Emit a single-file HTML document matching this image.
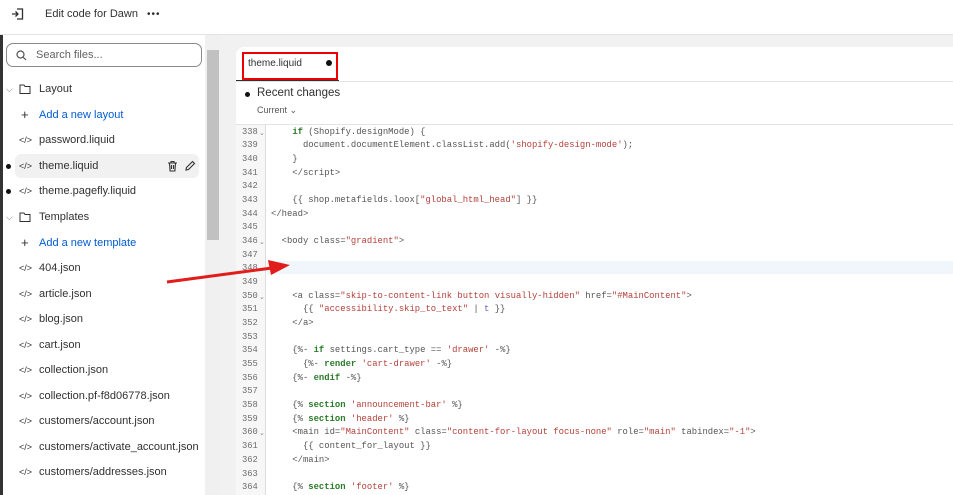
<!DOCTYPE html>
<html style="overflow:hidden;width:953px;height:495px"><head><style>
*{margin:0;padding:0;box-sizing:border-box}
body{width:953px;height:495px;overflow:hidden;background:#f1f1f1;font-family:"Liberation Sans",sans-serif}
#w{position:relative;width:953px;height:495px;overflow:hidden}
.top{position:absolute;left:0;top:0;width:953px;height:35px;background:#fff;border-bottom:1px solid #e3e3e3}
.top .t{position:absolute;left:45px;top:8px;font-size:11px;color:#303030}
.side{position:absolute;left:0;top:35px;width:205px;height:460px;background:#fff;border-left:3px solid #333}
.search{position:absolute;left:3px;top:8px;width:196px;height:24px;border:1px solid #8a8a8a;border-radius:7px;font-size:11px;color:#616161;padding:5px 0 0 29px}
.item{position:absolute;left:0;height:24px;width:198px;font-size:11px;color:#303030;line-height:24px}
.item .ic{position:absolute;left:19px;font-size:9px;color:#303030}
.item .tx{position:absolute;left:39px}
.blue{color:#005bd3}
.dot{position:absolute;left:6px;top:10px;width:5px;height:5px;border-radius:50%;background:#111}
.sb{position:absolute;left:205px;top:35px;width:14px;height:460px;background:#f0f0f0}
.thumb{position:absolute;left:207px;top:50px;width:12px;height:190px;background:#c1c1c1}
.card{position:absolute;left:236px;top:47px;width:717px;height:448px;background:#fff;border-radius:8px 0 0 0;overflow:hidden}
.tab{position:absolute;left:0;top:0;width:103px;height:34px;border-bottom:1.5px solid #303030;font-size:10px;color:#303030;padding:11px 0 0 12px}
.tabline{position:absolute;left:0;top:34px;width:717px;border-top:1px solid #e3e3e3}
.red{position:absolute;left:242px;top:52px;width:96px;height:28px;border:2.5px solid #e00}
.gut{position:absolute;left:0;top:78px;width:30px;height:370px;background:#f7f7f7;border-right:1px solid #ddd}
.ln{position:absolute;left:236px;font-family:"Liberation Mono",monospace;font-size:8.8px;line-height:10px;color:#6d6d6d;width:30px;padding-left:6px}
.fd{position:absolute;left:259px;font-size:7px;line-height:8px;color:#888;font-family:"Liberation Sans",sans-serif}
.cd{position:absolute;left:271px;font-family:"Liberation Mono",monospace;font-size:8.9px;line-height:10px;color:#555;white-space:pre}
.k{color:#2a7a2a;font-weight:bold}.s{color:#b3413a}.p{color:#7a5ab8}
</style></head><body><div id="w">
<div class="top">
<svg style="position:absolute;left:11px;top:7px" width="14" height="14" viewBox="0 0 14 14" fill="none" stroke="#303030" stroke-width="1.3"><path d="M6 2h5.5v10H6M1 7h6M4.5 4.5L7 7 4.5 9.5"/></svg>
<span class="t">Edit code for Dawn</span>
<span class="t" style="left:147px;top:9px;font-size:10px;letter-spacing:1px">•••</span>
</div>
<div class="side">
<div class="search">Search files...</div>
<svg style="position:absolute;left:13px;top:15px" width="11" height="11" viewBox="0 0 11 11" fill="none" stroke="#555" stroke-width="1.2"><circle cx="4.5" cy="4.5" r="3.5"/><path d="M7 7l3 3"/></svg>
</div>
<div class="sb"></div><div class="thumb"></div>
<div style="position:absolute;left:0;top:1px">
<div class="item" style="top:76px"><span class="ic" style="left:6px;color:#777">⌵</span><svg style="position:absolute;left:19px;top:7px" width="12" height="10" viewBox="0 0 12 10" fill="none" stroke="#303030"><path d="M1 1h4l1 1.5h5v7H1z"/></svg><span class="tx">Layout</span></div>
<div class="item" style="top:102px"><span class="ic blue" style="font-size:13px;left:21px">+</span><span class="tx blue">Add a new layout</span></div>
<div class="item" style="top:127px"><span class="ic">&lt;/&gt;</span><span class="tx">password.liquid</span></div>
<div class="item" style="top:153px;left:15px;width:184px;background:#f1f1f1;border-radius:6px"></div>
<div class="item" style="top:153px"><div class="dot"></div><span class="ic">&lt;/&gt;</span><span class="tx">theme.liquid</span>
<svg style="position:absolute;left:167px;top:6px" width="11" height="12" viewBox="0 0 11 12" fill="none" stroke="#303030" stroke-width="1.1"><path d="M1 3h9M4 3V1.5h3V3M2.5 3l.6 8h4.8l.6-8M4.5 5v4M6.5 5v4"/></svg>
<svg style="position:absolute;left:184px;top:6px" width="12" height="12" viewBox="0 0 12 12" fill="none" stroke="#303030" stroke-width="1.1"><path d="M2 10l.5-2.5L8.5 1.5l2 2-6 6z"/></svg></div>
<div class="item" style="top:178px"><div class="dot"></div><span class="ic">&lt;/&gt;</span><span class="tx">theme.pagefly.liquid</span></div>
<div class="item" style="top:204px"><span class="ic" style="left:6px;color:#777">⌵</span><svg style="position:absolute;left:19px;top:7px" width="12" height="10" viewBox="0 0 12 10" fill="none" stroke="#303030"><path d="M1 1h4l1 1.5h5v7H1z"/></svg><span class="tx">Templates</span></div>
<div class="item" style="top:230px"><span class="ic blue" style="font-size:13px;left:21px">+</span><span class="tx blue">Add a new template</span></div>
<div class="item" style="top:255px"><span class="ic">&lt;/&gt;</span><span class="tx">404.json</span></div>
<div class="item" style="top:281px"><span class="ic">&lt;/&gt;</span><span class="tx">article.json</span></div>
<div class="item" style="top:306px"><span class="ic">&lt;/&gt;</span><span class="tx">blog.json</span></div>
<div class="item" style="top:332px"><span class="ic">&lt;/&gt;</span><span class="tx">cart.json</span></div>
<div class="item" style="top:357px"><span class="ic">&lt;/&gt;</span><span class="tx">collection.json</span></div>
<div class="item" style="top:383px"><span class="ic">&lt;/&gt;</span><span class="tx">collection.pf-f8d06778.json</span></div>
<div class="item" style="top:408px"><span class="ic">&lt;/&gt;</span><span class="tx">customers/account.json</span></div>
<div class="item" style="top:434px"><span class="ic">&lt;/&gt;</span><span class="tx">customers/activate_account.json</span></div>
<div class="item" style="top:459px"><span class="ic">&lt;/&gt;</span><span class="tx">customers/addresses.json</span></div>
</div>
<div class="card">
<div class="tab">theme.liquid<span style="position:absolute;left:90px;top:13px;width:6px;height:6px;border-radius:50%;background:#111"></span></div>
<div class="tabline"></div>
<div style="position:absolute;left:9px;top:45px;width:5px;height:5px;border-radius:50%;background:#111"></div>
<div style="position:absolute;left:21px;top:40px;font-size:11.5px;color:#303030">Recent changes</div>
<div style="position:absolute;left:21px;top:58px;font-size:9px;color:#555">Current ⌄</div>
<div style="position:absolute;left:0;top:77px;width:717px;border-top:1px solid #e3e3e3"></div>
<div class="gut"></div>
<div style="position:absolute;left:31px;top:214px;width:686px;height:13px;background:#f0f6fb"></div>
</div>
<div class="red"></div>
<div id="code"></div>
<svg style="position:absolute;left:0;top:0" width="953" height="495"><path d="M167 282L272 268" stroke="#e21b1b" stroke-width="3"/><path d="M290 265L268 260L271 275Z" fill="#e21b1b"/></svg>
</div>
<script>
var L=[
['338','    <span class="k">if</span> (Shopify.designMode) {',1],
['339','      document.documentElement.classList.add(<span class="s">\'shopify-design-mode\'</span>);'],
['340','    }'],['341','    &lt;/script&gt;'],['342',''],
['343','    {{ shop.metafields.loox[<span class="s">"global_html_head"</span>] }}'],
['344','&lt;/head&gt;'],['345',''],
['346','  &lt;body class=<span class="s">"gradient"</span>&gt;',1],['347',''],['348',''],['349',''],
['350','    &lt;a class=<span class="s">"skip-to-content-link button visually-hidden"</span> href=<span class="s">"#MainContent"</span>&gt;',1],
['351','      {{ <span class="s">"accessibility.skip_to_text"</span> | <span class="p">t</span> }}'],
['352','    &lt;/a&gt;'],['353',''],
['354','    {%- <span class="k">if</span> settings.cart_type == <span class="s">\'drawer\'</span> -%}'],
['355','      {%- <span class="k">render</span> <span class="s">\'cart-drawer\'</span> -%}'],
['356','    {%- <span class="k">endif</span> -%}'],['357',''],
['358','    {% <span class="k">section</span> <span class="s">\'announcement-bar\'</span> %}'],
['359','    {% <span class="k">section</span> <span class="s">\'header\'</span> %}'],
['360','    &lt;main id=<span class="s">"MainContent"</span> class=<span class="s">"content-for-layout focus-none"</span> role=<span class="s">"main"</span> tabindex=<span class="s">"-1"</span>&gt;',1],
['361','      {{ content_for_layout }}'],['362','    &lt;/main&gt;'],['363',''],
['364','    {% <span class="k">section</span> <span class="s">\'footer\'</span> %}']];
var h='';L.forEach(function(l,i){var y=126.5+i*13.68;h+='<div class="ln" style="top:'+y+'px">'+l[0]+'</div>'+(l[2]?'<div class="fd" style="top:'+(y+3)+'px">⌄</div>':'')+'<div class="cd" style="top:'+y+'px">'+l[1]+'</div>';});
document.getElementById('code').innerHTML=h;
</script>
</body></html>
